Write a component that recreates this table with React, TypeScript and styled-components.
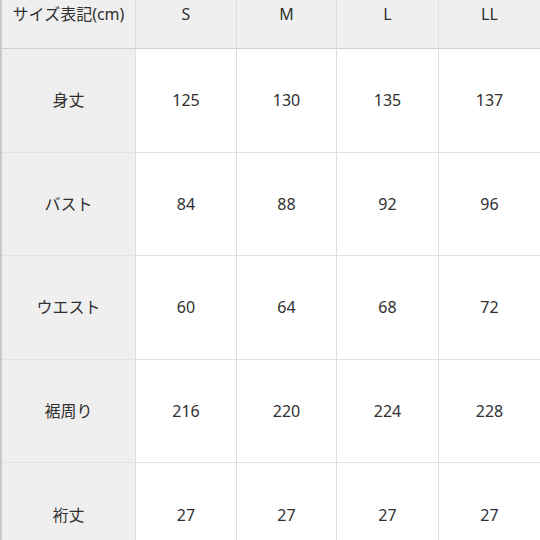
import React from "react";
import styled, { createGlobalStyle } from "styled-components";

const Global = createGlobalStyle`
  html, body { margin: 0; padding: 0; background: #ffffff; }
  body { font-family: "Noto Sans", "Noto Sans CJK JP", sans-serif; }
`;

const Table = styled.div`
  width: 540px;
  height: 540px;
  overflow: hidden;
  display: grid;
  grid-template-columns: 134px 101px 100px 102px 101px;
  grid-template-rows: 49px repeat(5, 103.6px);
  border-left: 2px solid #c9c9c9;
  box-sizing: border-box;
  color: #303030;
  font-size: 16px;
`;

const Cell = styled.div<{ $head?: boolean; $label?: boolean }>`
  display: flex;
  justify-content: center;
  align-items: ${(p) => (p.$head ? "flex-start" : "center")};
  padding-top: ${(p) => (p.$head ? "4px" : "0")};
  background: ${(p) => (p.$head || p.$label ? "#efefef" : "#ffffff")};
  border-right: 1px solid #dedede;
  border-bottom: 1px solid ${(p) => (p.$head ? "#cfcfcf" : "#e2e2e2")};
  box-sizing: border-box;
  line-height: 20px;
  white-space: nowrap;
  &:nth-child(5n) { border-right: none; }
`;

const head = ["サイズ表記(cm)", "S", "M", "L", "LL"];
const rows: [string, string[]][] = [
  ["身丈", ["125", "130", "135", "137"]],
  ["バスト", ["84", "88", "92", "96"]],
  ["ウエスト", ["60", "64", "68", "72"]],
  ["裾周り", ["216", "220", "224", "228"]],
  ["裄丈", ["27", "27", "27", "27"]],
];

export default function App() {
  return (
    <>
      <Global />
      <Table>
        {head.map((h) => (
          <Cell key={h} $head>{h}</Cell>
        ))}
        {rows.map(([label, vals]) => (
          <React.Fragment key={label}>
            <Cell $label>{label}</Cell>
            {vals.map((v, i) => (
              <Cell key={i}>{v}</Cell>
            ))}
          </React.Fragment>
        ))}
      </Table>
    </>
  );
}
